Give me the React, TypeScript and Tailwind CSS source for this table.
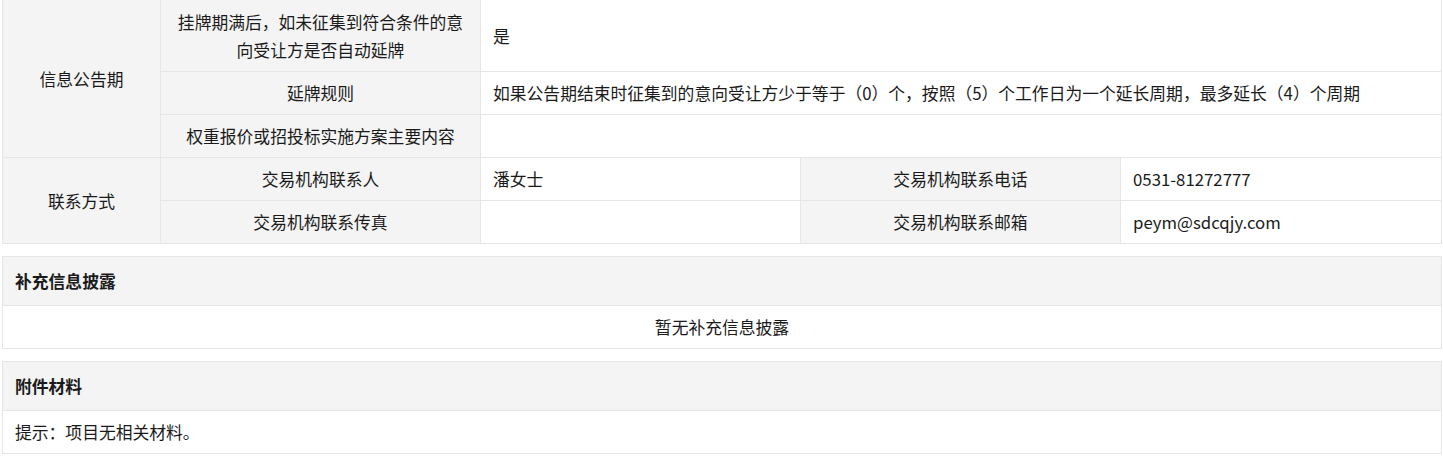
import React from "react";

const label = "bg-[#f4f4f4] border-l border-b border-[#e6e6e6] flex items-center justify-center text-center px-[12px] py-[7px]";
const value = "bg-white border-l border-b border-[#e6e6e6] flex items-center px-[12px] py-[7px]";

function Section({ title, children }: { title: string; children: React.ReactNode }) {
  return (
    <div className="mt-[12px] border border-[#e6e6e6]">
      <div className="bg-[#f4f4f4] border-b border-[#e6e6e6] px-[12px] py-[10px] font-bold">{title}</div>
      <div className="bg-white px-[12px] py-[7px]">{children}</div>
    </div>
  );
}

export default function App() {
  return (
    <div
      className="w-[1443px] h-[466px] bg-white text-[16.8px] leading-[28px] text-[#1a1a1a]"
      style={{ fontFamily: '"Noto Sans CJK SC", "Noto Sans", sans-serif' }}
    >
      <div className="ml-[2px] w-[1440px]">
        {/* detail table */}
        <div className="grid grid-cols-[158px_320px_320px_320px_321px] border-r border-[#e6e6e6]">
          <div className={`${label} row-span-3`}>信息公告期</div>
          <div className={`${label} pt-[8px]`}>
            挂牌期满后，如未征集到符合条件的意
            <br />
            向受让方是否自动延牌
          </div>
          <div className={`${value} col-span-3`}>是</div>

          <div className={label}>延牌规则</div>
          <div className={`${value} col-span-3`}>
            如果公告期结束时征集到的意向受让方少于等于（0）个，按照（5）个工作日为一个延长周期，最多延长（4）个周期
          </div>

          <div className={label}>权重报价或招投标实施方案主要内容</div>
          <div className={`${value} col-span-3`}>&nbsp;</div>

          <div className={`${label} row-span-2`}>联系方式</div>
          <div className={label}>交易机构联系人</div>
          <div className={value}>潘女士</div>
          <div className={label}>交易机构联系电话</div>
          <div className={value}>0531-81272777</div>

          <div className={label}>交易机构联系传真</div>
          <div className={value}>&nbsp;</div>
          <div className={label}>交易机构联系邮箱</div>
          <div className={value}>peym@sdcqjy.com</div>
        </div>

        <Section title="补充信息披露">
          <div className="text-center">暂无补充信息披露</div>
        </Section>

        <Section title="附件材料">
          <div>提示：项目无相关材料。</div>
        </Section>
      </div>
    </div>
  );
}
